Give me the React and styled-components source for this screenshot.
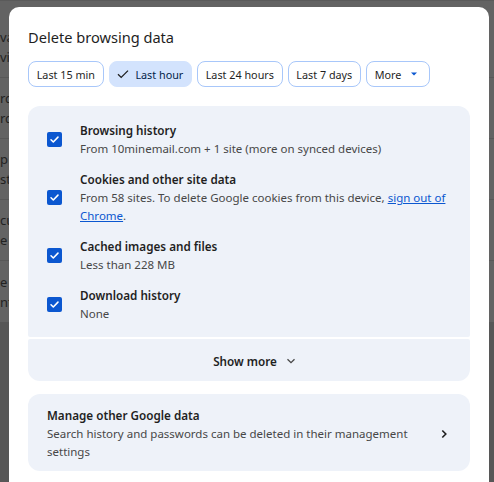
import styled, { createGlobalStyle } from 'styled-components';

const GlobalStyle = createGlobalStyle`
  html, body {
    margin: 0;
    padding: 0;
    height: 482px;
    overflow: hidden;
    background: #575757;
    font-family: "Noto Sans", "Open Sans", sans-serif;
  }
`;

const Screen = styled.div`
  position: relative;
  width: 494px;
  height: 482px;
  overflow: hidden;
  background: #575757;
`;

const BackPage = styled.div`
  display: flex;
  flex-direction: column;
  height: 322px;
  background: #636363;
  padding-top: 16px;
  box-sizing: border-box;
  border-top: 1px solid #5a5a5a;
`;

const BackRow = styled.div`
  height: 61px;
  box-sizing: border-box;
  border-bottom: 1px solid #585858;
  display: flex;
  flex-direction: column;
  justify-content: center;
  gap: 2px;
  font-size: 13px;
  line-height: 18px;
  color: #222;
  &:last-child {
    border-bottom: none;
  }
`;

const Dialog = styled.div`
  position: absolute;
  top: 7px;
  left: 9px;
  width: 480px;
  height: 520px;
  box-sizing: border-box;
  background: #fff;
  border-radius: 10px;
  padding: 18px 19px;
  display: flex;
  flex-direction: column;
`;

const Title = styled.h2`
  margin: 0;
  font-size: 14.6px;
  line-height: 24px;
  font-weight: 400;
  color: #1f1f1f;
`;

const Chips = styled.div`
  display: flex;
  gap: 5px;
  margin-top: 12px;
`;

const Chip = styled.button`
  height: 26px;
  box-sizing: border-box;
  display: flex;
  align-items: center;
  gap: 6px;
  padding: 0 7.7px;
  border-radius: 8px;
  font-family: inherit;
  font-size: 10.8px;
  color: ${(p) => (p.$selected ? '#041e49' : '#1f1f1f')};
  background: ${(p) => (p.$selected ? '#d3e3fd' : '#fff')};
  border: 1px solid ${(p) => (p.$selected ? '#d3e3fd' : '#a8c7fa')};
  cursor: pointer;
`;

const Panel = styled.div`
  margin-top: 19px;
  display: flex;
  flex-direction: column;
  gap: 2px;
`;

const List = styled.div`
  background: #eef2f9;
  border-radius: 12px 12px 2px 2px;
  padding: 15px 14px 14px 19px;
  display: flex;
  flex-direction: column;
  gap: 12px;
`;

const Item = styled.label`
  display: flex;
  align-items: center;
  gap: 18px;
`;

const Box = styled.span`
  flex: none;
  width: 15px;
  height: 15px;
  border-radius: 2px;
  background: #0b57d0;
  display: flex;
  align-items: center;
  justify-content: center;
`;

const ItemText = styled.div`
  display: flex;
  flex-direction: column;
`;

const ItemTitle = styled.div`
  font-size: 11.7px;
  line-height: 19px;
  font-weight: 600;
  color: #1f1f1f;
`;

const ItemSub = styled.div`
  font-size: 11.5px;
  line-height: 18px;
  color: #474747;
`;

const Link = styled.a`
  color: #0b57d0;
  text-decoration: underline;
`;

const ShowMore = styled.button`
  height: 42px;
  border: none;
  border-radius: 2px 2px 12px 12px;
  background: #eef2f9;
  font-family: inherit;
  font-size: 11.7px;
  font-weight: 600;
  color: #1f1f1f;
  display: flex;
  align-items: center;
  justify-content: center;
  gap: 8px;
  padding: 2px 0 0 12px;
`;

const ManageCard = styled.div`
  margin-top: 13px;
  background: #eef2f9;
  border-radius: 12px;
  padding: 12px 20px 10px 19px;
  display: flex;
  align-items: center;
  gap: 18px;
`;

const ManageText = styled.div`
  flex: 1;
  display: flex;
  flex-direction: column;
`;

function CheckBox() {
  return (
    <Box>
      <svg width="11" height="11" viewBox="0 0 12 12" fill="none">
        <path d="M2.2 6.3l2.5 2.4L9.8 3.4" stroke="#fff" strokeWidth="1.7" strokeLinecap="round" strokeLinejoin="round" />
      </svg>
    </Box>
  );
}

const items = [
  { title: 'Browsing history', sub: 'From 10minemail.com + 1 site (more on synced devices)' },
  {
    title: 'Cookies and other site data',
    sub: (
      <>
        From 58 sites. To delete Google cookies from this device, <Link href="#">sign out of Chrome</Link>.
      </>
    ),
  },
  { title: 'Cached images and files', sub: 'Less than 228 MB' },
  { title: 'Download history', sub: 'None' },
];

const backRows = [
  ['va', 'vie'],
  ['rd', 'rd'],
  ['p', 'sto'],
  ['cu', 'e'],
  ['e s', 'nt'],
];

export default function App() {
  return (
    <Screen>
      <GlobalStyle />
      <BackPage>
        {backRows.map(([a, b], i) => (
          <BackRow key={i}>
            <span>{a}</span>
            <span>{b}</span>
          </BackRow>
        ))}
      </BackPage>

      <Dialog>
        <Title>Delete browsing data</Title>
        <Chips>
          <Chip>Last 15 min</Chip>
          <Chip $selected>
            <svg width="12" height="12" viewBox="0 0 12 12" fill="none">
              <path d="M1 6.2l3.2 3.2L11 2.6" stroke="#1f1f1f" strokeWidth="1.3" />
            </svg>
            Last hour
          </Chip>
          <Chip>Last 24 hours</Chip>
          <Chip>Last 7 days</Chip>
          <Chip>
            More
            <svg width="14" height="10" viewBox="0 0 14 10">
              <path d="M4 3.5h6L7 6.5z" fill="#0b57d0" />
            </svg>
          </Chip>
        </Chips>

        <Panel>
          <List>
            {items.map((it) => (
              <Item key={it.title}>
                <CheckBox />
                <ItemText>
                  <ItemTitle>{it.title}</ItemTitle>
                  <ItemSub>{it.sub}</ItemSub>
                </ItemText>
              </Item>
            ))}
          </List>
          <ShowMore>
            Show more
            <svg width="12" height="12" viewBox="0 0 12 12" fill="none">
              <path d="M2.5 4.2L6 7.7l3.5-3.5" stroke="#474747" strokeWidth="1.3" />
            </svg>
          </ShowMore>
        </Panel>

        <ManageCard>
          <ManageText>
            <ItemTitle>Manage other Google data</ItemTitle>
            <ItemSub>Search history and passwords can be deleted in their management settings</ItemSub>
          </ManageText>
          <svg width="12" height="12" viewBox="0 0 12 12" fill="none">
            <path d="M4.3 2.5L7.8 6l-3.5 3.5" stroke="#1f1f1f" strokeWidth="1.6" />
          </svg>
        </ManageCard>
      </Dialog>
    </Screen>
  );
}
